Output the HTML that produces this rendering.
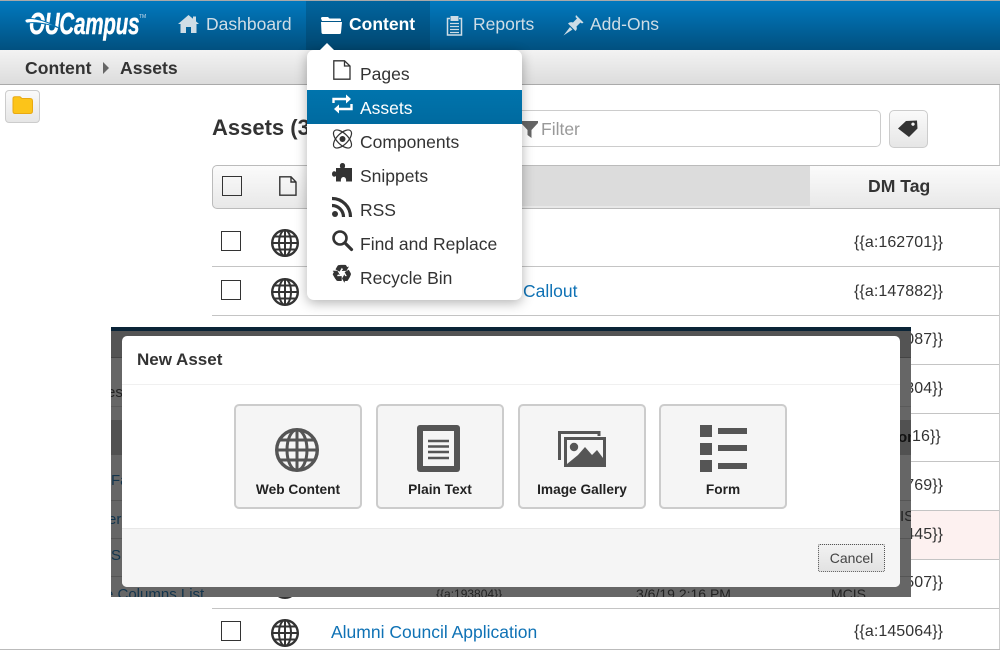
<!DOCTYPE html>
<html><head><meta charset="utf-8"><style>
*{box-sizing:border-box}
html,body{margin:0;padding:0;width:1000px;height:650px;overflow:hidden;background:#fff;font-family:"Liberation Sans",sans-serif;color:#333}
.a{position:absolute;white-space:nowrap}
svg{position:absolute;overflow:visible}
.nav{left:0;top:0;width:1000px;height:50px;border-top:1px solid #a9a9a9;background:linear-gradient(#0179bf,#01507f)}
.navt{font-size:17.5px;line-height:20px;top:14px;color:#cfdde6}
.line{left:212px;width:787px;height:1px;background:#c4c4c4}
.cb{left:221px;width:20px;height:20px;border:1.5px solid #333;background:#fff}
.tag{left:854px;font-size:16px;line-height:18px;color:#333;letter-spacing:.08px}
.mi{left:360px;font-size:17.5px;line-height:20px;color:#333}
.btn{top:404px;width:128px;height:105px;background:#f5f5f5;border:2px solid #ccc;border-radius:5px}
.bl{top:482px;width:128px;text-align:center;font-size:13.7px;font-weight:bold;line-height:16px;color:#222}
.ot{font-size:15px;line-height:16px;color:#12344c}
</style></head><body>
<svg width="0" height="0" style="position:absolute"><defs>
<g id="globe" fill="none" stroke="currentColor"><circle cx="14" cy="14" r="12.8" stroke-width="2.4"/><ellipse cx="14" cy="14" rx="6" ry="12.8" stroke-width="2"/><path d="M14 1V27M1.5 14H26.5M3.5 7.5H24.5M3.5 20.5H24.5" stroke-width="2"/></g>
</defs></svg>

<div class="a" style="left:999px;top:84px;width:1px;height:566px;background:#ccc"></div>

<!-- nav -->
<div class="a nav"></div>
<div class="a" style="left:306px;top:1px;width:124px;height:49px;background:linear-gradient(#01659f,#01466f)"></div>
<div class="a" style="left:29px;top:7px;font-size:31px;line-height:34px;font-weight:bold;font-style:italic;color:#fff;transform:scaleX(.66);transform-origin:0 0;letter-spacing:-.2px;-webkit-text-stroke:.5px #fff">OUCampus</div>
<svg style="left:25px;top:15px" width="40" height="20" viewBox="0 0 40 20"><path d="M0 5C2 2 16 3 34 13C22 8 8 7 3 8C1 8.500 -.5 6.500 0 5Z" fill="#fff" stroke="#0170b0" stroke-width="1"/></svg>
<div class="a" style="left:139px;top:14px;font-size:5px;color:#cde">TM</div>
<svg style="left:178px;top:15px" width="21" height="18" viewBox="0 0 21 18"><path d="M10.500 0L15 3.800V1.500H18V6.400L21 9H18.500V18H13V12H8V18H2.500V9H0Z" fill="#cfdde6"/></svg>
<div class="a navt" style="left:206px">Dashboard</div>
<svg style="left:321px;top:16px" width="21" height="18" viewBox="0 0 21 18"><path d="M0 2.500Q0 1 1.500 1H7L8.500 2.500H19Q20 2.500 20 4V5H1V5ZM0 6H21L20 16.500Q20 18 18.500 18H2Q.7 18 .5 16.500Z" fill="#fff"/></svg>
<div class="a navt" style="left:349px;color:#fff;font-weight:bold">Content</div>
<svg style="left:446px;top:15px" width="17" height="21" viewBox="0 0 17 21" fill="none" stroke="#cfdde6"><path d="M4 3.500H1.500V20H15.500V3.500H13" stroke-width="1.500"/><path d="M5 1.500H12V5.500H5Z" fill="#cfdde6"/><path d="M4 8.500H13M4 11.500H13M4 14.500H13M4 17.500H13" stroke-width="1.300"/></svg>
<div class="a navt" style="left:473px">Reports</div>
<svg style="left:563px;top:15px" width="21" height="21" viewBox="0 0 21 21"><path d="M13 0L20.500 7.500L19 8.500L17.500 7.500L13.500 11.500Q14.500 14.500 12.500 16L5 8.500Q7 6.500 10 7.500L14 3.500L12.500 2ZM7 12L9.500 14.500L.5 20.500Z" fill="#cfdde6"/></svg>
<div class="a navt" style="left:590px">Add-Ons</div>

<!-- breadcrumb -->
<div class="a" style="left:0;top:50px;width:1000px;height:35px;background:linear-gradient(#f3f3f3,#dcdcdc);border-bottom:1px solid #aaa"></div>
<div class="a" style="left:25px;top:58px;font-size:17.6px;line-height:20px;font-weight:bold;color:#333">Content</div>
<div class="a" style="left:103px;top:62px;width:0;height:0;border-left:6px solid #666;border-top:6px solid transparent;border-bottom:6px solid transparent"></div>
<div class="a" style="left:120px;top:58px;font-size:17.6px;line-height:20px;font-weight:bold;color:#333">Assets</div>

<!-- folder button -->
<div class="a" style="left:5px;top:90px;width:35px;height:33px;border:1px solid #ccc;border-radius:4px;background:linear-gradient(#fafafa,#e6e6e6)"></div>
<svg style="left:12px;top:96px" width="21" height="18" viewBox="0 0 21 18"><path d="M1 2.500Q1 .7 3 .7H8L10 2.500H18Q20.500 2.500 20.500 5V15Q20.500 17.500 18 17.500H3Q1 17.500 1 15Z" fill="#fcc419" stroke="#e9a911"/></svg>

<!-- title and filter -->
<div class="a" style="left:212px;top:115px;font-size:22px;line-height:26px;font-weight:bold;color:#333">Assets (3</div>
<div class="a" style="left:480px;top:110px;width:401px;height:37px;border:1px solid #ccc;border-radius:5px;background:#fff"></div>
<svg style="left:521px;top:121px" width="17" height="17" viewBox="0 0 17 17"><path d="M0 0H17V2L10.500 9V17L6.500 14V9L0 2Z" fill="#666"/></svg>
<div class="a" style="left:541px;top:119px;font-size:17.5px;line-height:20px;color:#999">Filter</div>
<div class="a" style="left:889px;top:110px;width:39px;height:38px;border:1px solid #ccc;border-radius:5px;background:linear-gradient(#fafafa,#e6e6e6)"></div>
<svg style="left:898px;top:120px" width="20" height="18" viewBox="0 0 20 18"><path d="M0 8.500L8 1L19 .5L19.500 8.500L11 17ZM15 2.500A1.700 1.700 0 1 0 15.010 2.500Z" fill="#333" fill-rule="evenodd"/></svg>

<!-- table header -->
<div class="a" style="left:212px;top:165px;width:788px;height:44px;border:1px solid #bbb;border-right:0;border-radius:5px 0 0 5px;background:linear-gradient(#fbfbfb,#e8e8e8)"></div>
<div class="a" style="left:510px;top:166px;width:300px;height:40px;background:#dcdcdc"></div>
<div class="a" style="left:868px;top:176px;font-size:17.6px;line-height:20px;font-weight:bold;color:#333">DM Tag</div>
<div class="a" style="left:222px;top:176px;width:20px;height:20px;border:1.500px solid #333"></div>
<svg style="left:279px;top:176px" width="18" height="20" viewBox="0 0 18 20"><path d="M.8.8H12L17 6V19.200H.8ZM12 .8V6H17" fill="none" stroke="#333" stroke-width="1.400"/></svg>

<!-- rows -->
<div class="a line" style="top:266px"></div>
<div class="a line" style="top:315px"></div>
<div class="a line" style="top:364px"></div>
<div class="a line" style="top:413px"></div>
<div class="a line" style="top:461px"></div>
<div class="a" style="left:212px;top:511px;width:787px;height:48px;background:#fdf1f0"></div>
<div class="a line" style="top:510px"></div>
<div class="a line" style="top:559px"></div>
<div class="a line" style="top:608px"></div>
<div class="a line" style="top:649px;left:0;width:1000px;background:#bbb"></div>

<div class="a cb" style="top:231px"></div>
<svg style="left:271px;top:229px;color:#333" width="28" height="28"><use href="#globe"/></svg>
<div class="a cb" style="top:280px"></div>
<svg style="left:271px;top:278px;color:#333" width="28" height="28"><use href="#globe"/></svg>
<div class="a cb" style="top:621px"></div>
<svg style="left:271px;top:619px;color:#333" width="28" height="28"><use href="#globe"/></svg>
<svg style="left:271px;top:571px;color:#333" width="28" height="28"><use href="#globe"/></svg>

<div class="a" style="left:523px;top:281px;font-size:17.5px;line-height:20px;color:#0f72b5">Callout</div>
<div class="a" style="left:331px;top:622px;font-size:17.5px;line-height:20px;color:#0f72b5">Alumni Council Application</div>

<div class="a tag" style="top:234px">{{a:162701}}</div>
<div class="a tag" style="top:283px">{{a:147882}}</div>
<div class="a tag" style="top:331px">{{a:146087}}</div>
<div class="a tag" style="top:380px">{{a:147304}}</div>
<div class="a tag" style="left:912px;top:428px">16}}</div>
<div class="a tag" style="top:477px">{{a:146769}}</div>
<div class="a tag" style="top:526px">{{a:147445}}</div>
<div class="a tag" style="top:574px">{{a:193507}}</div>
<div class="a tag" style="top:623px">{{a:145064}}</div>

<!-- overlay strip -->
<div class="a" style="left:111px;top:327px;width:800px;height:270px;background:#666;overflow:hidden">
  <div class="a" style="left:0;top:0;width:800px;height:4px;background:#0a2437"></div>
  <div class="a" style="left:0;top:4px;width:800px;height:26px;background:#545454"></div>
  <div class="a" style="left:0;top:30px;width:800px;height:1px;background:#444"></div>
  <div class="a" style="left:0;top:79px;width:800px;height:1px;background:#5a5a5a"></div>
  <div class="a" style="left:0;top:93px;width:800px;height:35px;background:#515151"></div>
  <div class="a" style="left:0;top:173px;width:800px;height:1px;background:#555"></div>
  <div class="a" style="left:0;top:211px;width:800px;height:1px;background:#555"></div>
  <div class="a" style="left:0;top:249px;width:800px;height:1px;background:#555"></div>
  <div class="a ot" style="left:-4px;top:58px;color:#222">es</div>
  <div class="a ot" style="left:0;top:146px">Fa</div>
  <div class="a ot" style="left:-3px;top:185px">er</div>
  <div class="a ot" style="left:0;top:221px">S</div>
  <div class="a ot" style="left:-6px;top:260px">e Columns List</div>
  <div class="a ot" style="left:325px;top:259px;font-size:12px;color:#222">{{a:193804}}</div>
  <div class="a ot" style="left:525px;top:259px;font-size:14px;color:#222">3/6/19 2:16 PM</div>
  <div class="a ot" style="left:720px;top:259px;font-size:14px;color:#222">MCIS</div>
  <div class="a ot" style="left:787px;top:103px;font-weight:bold;color:#111">on</div>
  <div class="a ot" style="left:789px;top:182px;color:#222">IS</div>
</div>

<!-- modal -->
<div class="a" style="left:122px;top:336px;width:778px;height:251px;background:#fff;border-radius:5px;overflow:hidden">
  <div class="a" style="left:0;top:48px;width:778px;height:1px;background:#f0f0f0"></div>
  <div class="a" style="left:0;top:192px;width:778px;height:59px;background:#f5f5f5;border-top:1px solid #e8e8e8"></div>
</div>
<div class="a" style="left:137px;top:350px;font-size:17px;line-height:20px;font-weight:bold;color:#333">New Asset</div>

<div class="a btn" style="left:234px"></div>
<div class="a btn" style="left:376px"></div>
<div class="a btn" style="left:518px"></div>
<div class="a btn" style="left:659px"></div>
<div class="a bl" style="left:234px">Web Content</div>
<div class="a bl" style="left:376px">Plain Text</div>
<div class="a bl" style="left:518px">Image Gallery</div>
<div class="a bl" style="left:659px">Form</div>

<svg style="left:275px;top:428px" width="44" height="44" viewBox="0 0 44 44" fill="none" stroke="#555"><circle cx="22" cy="22" r="20.300" stroke-width="3.400"/><ellipse cx="22" cy="22" rx="10" ry="20.300" stroke-width="3"/><path d="M22 2V42M2 22H42M5 12H39M5 32H39" stroke-width="3"/></svg>
<svg style="left:417px;top:425px" width="43" height="47" viewBox="0 0 43 47"><rect width="43" height="47" rx="3" fill="#555"/><rect x="6" y="6" width="31" height="35" fill="#f5f5f5"/><path d="M11 16H32M11 21.500H32M11 27H32M11 33H32" stroke="#555" stroke-width="2.500"/></svg>
<svg style="left:558px;top:431px" width="48" height="36" viewBox="0 0 48 36"><path d="M1.500 29V1.500H41V5" fill="none" stroke="#555" stroke-width="3"/><rect x="7.500" y="7.500" width="39" height="27" fill="none" stroke="#555" stroke-width="3"/><circle cx="16" cy="16" r="4.200" fill="#555"/><path d="M9 33L20 24L27 16L34 24L39 19L45 27V33Z" fill="#555"/></svg>
<svg style="left:700px;top:425px" width="47" height="47" viewBox="0 0 47 47" fill="#555"><rect width="12" height="12"/><rect y="18" width="12" height="12"/><rect y="35" width="12" height="12"/><rect x="18" y="3" width="29" height="6"/><rect x="18" y="20" width="29" height="6"/><rect x="18" y="38" width="29" height="6"/></svg>

<div class="a" style="left:818px;top:544px;width:67px;height:28px;background:linear-gradient(#f2f2f2,#e2e2e2);border:1px dotted #555;border-radius:2px;text-align:center;font-size:14px;line-height:26px;color:#444">Cancel</div>

<!-- menu -->
<div class="a" style="left:307px;top:50px;width:215px;height:250px;background:#fff;border-radius:7px;box-shadow:0 3px 12px rgba(0,0,0,.3)"></div>
<div class="a" style="left:320px;top:43px;width:0;height:0;border-left:7px solid transparent;border-right:7px solid transparent;border-bottom:7px solid #fff"></div>
<div class="a" style="left:307px;top:90px;width:215px;height:34px;background:linear-gradient(#0074ad,#006a9f)"></div>

<svg style="left:333px;top:60px" width="18" height="20" viewBox="0 0 18 20"><path d="M.8.8H11.500L17 6V19.200H.8ZM11.500 .8V6H17" fill="none" stroke="#333" stroke-width="1.300"/></svg>
<div class="a mi" style="top:64px">Pages</div>

<svg style="left:332px;top:94px" width="21" height="20" viewBox="0 0 21 20" fill="none" stroke="#fff" stroke-width="2.400"><path d="M1.500 9V5H17"/><path d="M19.500 10V15H4"/><path d="M14 .5L19 5L14 9.500Z" fill="#fff" stroke="none"/><path d="M7 10.500L2 15L7 19.500Z" fill="#fff" stroke="none"/></svg>
<div class="a mi" style="top:98px;color:#fff">Assets</div>

<svg style="left:332px;top:128px" width="21" height="22" viewBox="0 0 21 22" fill="none" stroke="#333" stroke-width="1.200"><ellipse cx="10.500" cy="11" rx="11.500" ry="5.500" transform="rotate(45 10.500 11)"/><ellipse cx="10.500" cy="11" rx="11.500" ry="5.500" transform="rotate(-45 10.500 11)"/><circle cx="10.500" cy="11" r="3" fill="#333" stroke="none"/></svg>
<div class="a mi" style="top:132px">Components</div>

<svg style="left:332px;top:162px" width="21" height="20" viewBox="0 0 21 20"><path d="M4 6H8.500C7.500 4.500 7.500 1 10.500 1S13.500 4.500 12.500 6H20V19.500H14C14.500 17 13.500 15 11.500 15S8.500 17 9 19.500H4V14C2 15.500 0 14.500 0 12S2 8.500 4 10Z" fill="#333"/></svg>
<div class="a mi" style="top:166px">Snippets</div>

<svg style="left:332px;top:196px" width="21" height="21" viewBox="0 0 21 21" fill="none" stroke="#333" stroke-width="3.200"><circle cx="3" cy="18" r="3" fill="#333" stroke="none"/><path d="M0 9.500A11.500 11.500 0 0 1 11.500 21"/><path d="M0 2.500A18.500 18.500 0 0 1 18.500 21"/></svg>
<div class="a mi" style="top:200px">RSS</div>

<svg style="left:332px;top:230px" width="21" height="21" viewBox="0 0 21 21" fill="none" stroke="#333"><circle cx="8" cy="8" r="6.500" stroke-width="2.600"/><path d="M13 13L19.500 19.500" stroke-width="3.200" stroke-linecap="round"/></svg>
<div class="a mi" style="top:234px">Find and Replace</div>

<div class="a" style="left:331px;top:261px;font-size:24px;line-height:26px;font-family:'DejaVu Sans',sans-serif;color:#333;-webkit-text-stroke:.7px #333">&#9851;</div>
<div class="a mi" style="top:268px">Recycle Bin</div>
</body></html>
